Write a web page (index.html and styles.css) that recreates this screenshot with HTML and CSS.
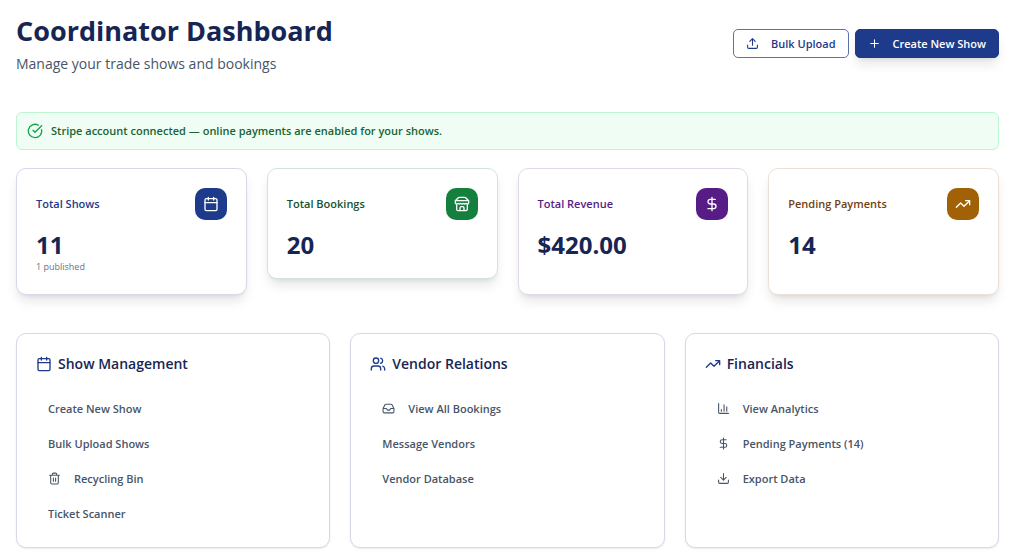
FILE: index.html
```
<!DOCTYPE html>
<html lang="en">
<head>
<meta charset="UTF-8">
<meta name="viewport" content="width=device-width, initial-scale=1.0">
<title>Coordinator Dashboard</title>
<link rel="stylesheet" href="styles.css">
</head>
<body>
    <!-- shared icons -->
    <svg class="sprite" aria-hidden="true">
        <symbol id="calendar" viewBox="0 0 24 24"><path d="M8 2v4M16 2v4M3 10h18"/><rect x="3" y="4" width="18" height="18" rx="2"/></symbol>
        <symbol id="dollar" viewBox="0 0 24 24"><path d="M12 2v20M17 5H9.5a3.5 3.5 0 0 0 0 7h5a3.5 3.5 0 0 1 0 7H6"/></symbol>
        <symbol id="trending" viewBox="0 0 24 24"><path d="M22 7l-8.500 8.500-5-5L2 17M16 7h6v6"/></symbol>
    </svg>

    <main class="dashboard">
        <header class="header">
            <div>
                <h1>Coordinator Dashboard</h1>
                <p class="subtitle">Manage your trade shows and bookings</p>
            </div>
            <div class="header-actions">
                <button type="button" class="btn btn-outline">
                    <svg class="icon" viewBox="0 0 24 24" aria-hidden="true"><path d="M12 3v12M17 8l-5-5-5 5M21 15v4a2 2 0 0 1-2 2H5a2 2 0 0 1-2-2v-4"/></svg>
                    Bulk Upload
                </button>
                <button type="button" class="btn btn-primary">
                    <svg class="icon" viewBox="0 0 24 24" aria-hidden="true"><path d="M5 12h14M12 5v14"/></svg>
                    Create New Show
                </button>
            </div>
        </header>

        <div class="alert" role="status">
            <svg class="icon icon-lg" viewBox="0 0 24 24" aria-hidden="true"><path d="M21.801 10A10 10 0 1 1 17 3.335M9 11l3 3L22 4"/></svg>
            <p>Stripe account connected — online payments are enabled for your shows.</p>
        </div>

        <section class="stats">
            <article class="card stat stat-blue">
                <div class="stat-head">
                    <h2>Total Shows</h2>
                    <span class="stat-icon"><svg class="icon icon-md" aria-hidden="true"><use href="#calendar"/></svg></span>
                </div>
                <p class="stat-value">11</p>
                <p class="stat-note">1 published</p>
            </article>
            <article class="card stat stat-green">
                <div class="stat-head">
                    <h2>Total Bookings</h2>
                    <span class="stat-icon"><svg class="icon icon-md" viewBox="0 0 24 24" aria-hidden="true"><path d="M2 7l4.410-4.410A2 2 0 0 1 7.830 2h8.340a2 2 0 0 1 1.420.590L22 7M4 12v8a2 2 0 0 0 2 2h12a2 2 0 0 0 2-2v-8M15 22v-4a2 2 0 0 0-2-2h-2a2 2 0 0 0-2 2v4M2 7h20M22 7v3a2 2 0 0 1-2 2 2.700 2.700 0 0 1-1.590-.630.700.700 0 0 0-.820 0A2.700 2.700 0 0 1 16 12a2.700 2.700 0 0 1-1.590-.630.700.700 0 0 0-.820 0A2.700 2.700 0 0 1 12 12a2.700 2.700 0 0 1-1.590-.630.700.700 0 0 0-.820 0A2.700 2.700 0 0 1 8 12a2.700 2.700 0 0 1-1.590-.630.700.700 0 0 0-.820 0A2.700 2.700 0 0 1 4 12a2 2 0 0 1-2-2V7"/></svg></span>
                </div>
                <p class="stat-value">20</p>
            </article>
            <article class="card stat stat-purple stat-tall">
                <div class="stat-head">
                    <h2>Total Revenue</h2>
                    <span class="stat-icon"><svg class="icon icon-md" aria-hidden="true"><use href="#dollar"/></svg></span>
                </div>
                <p class="stat-value">$420.00</p>
            </article>
            <article class="card stat stat-amber stat-tall">
                <div class="stat-head">
                    <h2>Pending Payments</h2>
                    <span class="stat-icon"><svg class="icon icon-md" aria-hidden="true"><use href="#trending"/></svg></span>
                </div>
                <p class="stat-value">14</p>
            </article>
        </section>

        <section class="panels">
            <article class="card panel">
                <h2><svg class="icon icon-md" aria-hidden="true"><use href="#calendar"/></svg>Show Management</h2>
                <nav class="links" aria-label="Show Management">
                    <a href="#">Create New Show</a>
                    <a href="#">Bulk Upload Shows</a>
                    <a href="#"><svg class="icon" viewBox="0 0 24 24" aria-hidden="true"><path d="M3 6h18M19 6v14a2 2 0 0 1-2 2H7a2 2 0 0 1-2-2V6M8 6V4a2 2 0 0 1 2-2h4a2 2 0 0 1 2 2v2M10 11v6M14 11v6"/></svg>Recycling Bin</a>
                    <a href="#">Ticket Scanner</a>
                </nav>
            </article>
            <article class="card panel">
                <h2><svg class="icon icon-md" viewBox="0 0 24 24" aria-hidden="true"><path d="M16 21v-2a4 4 0 0 0-4-4H6a4 4 0 0 0-4 4v2M22 21v-2a4 4 0 0 0-3-3.870M16 3.130a4 4 0 0 1 0 7.750"/><circle cx="9" cy="7" r="4"/></svg>Vendor Relations</h2>
                <nav class="links" aria-label="Vendor Relations">
                    <a href="#"><svg class="icon" viewBox="0 0 24 24" aria-hidden="true"><path d="M22 12h-6l-2 3h-4l-2-3H2M5.450 5.110L2 12v6a2 2 0 0 0 2 2h16a2 2 0 0 0 2-2v-6l-3.450-6.890A2 2 0 0 0 16.760 4H7.240a2 2 0 0 0-1.790 1.110z"/></svg>View All Bookings</a>
                    <a href="#">Message Vendors</a>
                    <a href="#">Vendor Database</a>
                </nav>
            </article>
            <article class="card panel">
                <h2><svg class="icon icon-md" aria-hidden="true"><use href="#trending"/></svg>Financials</h2>
                <nav class="links" aria-label="Financials">
                    <a href="#"><svg class="icon" viewBox="0 0 24 24" aria-hidden="true"><path d="M3 3v16a2 2 0 0 0 2 2h16M8 17v-3M13 17V5M18 17V9"/></svg>View Analytics</a>
                    <a href="#"><svg class="icon" aria-hidden="true"><use href="#dollar"/></svg>Pending Payments (14)</a>
                    <a href="#"><svg class="icon" viewBox="0 0 24 24" aria-hidden="true"><path d="M12 15V3M7 10l5 5 5-5M21 15v4a2 2 0 0 1-2 2H5a2 2 0 0 1-2-2v-4"/></svg>Export Data</a>
                </nav>
            </article>
        </section>
    </main>
</body>
</html>
```
FILE: styles.css
```
* {
    box-sizing: border-box;
}

body {
    margin: 0;
    background: #fff;
    color: #172554;
    font-family: "Segoe UI", "Open Sans", "Noto Sans", sans-serif;
    font-size: 11px;
    line-height: 16px;
}

h1, h2, p {
    margin: 0;
}

.sprite {
    display: none;
}

.dashboard {
    padding: 11px 25px 7px 16px;
}

.icon {
    flex: none;
    width: 13px;
    height: 13px;
    fill: none;
    stroke: currentColor;
    stroke-width: 2;
    stroke-linecap: round;
    stroke-linejoin: round;
}

.icon-md,
.icon-lg {
    width: 16px;
    height: 16px;
}

/* header */
.header {
    display: flex;
    justify-content: space-between;
    align-items: center;
    margin-bottom: 36px;
}

h1 {
    font-size: 27px;
    font-weight: 700;
    line-height: 40px;
}

.subtitle {
    color: #475569;
    font-size: 14px;
    line-height: 25px;
}

.header-actions {
    display: flex;
    gap: 6px;
}

.btn {
    display: flex;
    align-items: center;
    gap: 12px;
    height: 29px;
    padding: 0 12px;
    border: 1px solid #1e3a8a;
    border-radius: 5px;
    font: inherit;
    font-weight: 600;
}

.btn-outline {
    border-color: #5d71ad;
    background: #fff;
    color: #1e3a8a;
}

.btn-primary {
    background: #1e3a8a;
    color: #fff;
    box-shadow: 0 8px 12px -2px rgba(0, 0, 0, 0.1), 0 3px 5px -3px rgba(0, 0, 0, 0.1);
}

.alert {
    display: flex;
    align-items: center;
    gap: 8px;
    margin-bottom: 18px;
    padding: 10px;
    border: 1px solid #bbf7d0;
    border-radius: 6px;
    background: #f0fdf4;
    color: #166534;
    font-weight: 600;
}

.alert .icon {
    color: #16a34a;
}

.card {
    border: 1px solid #d5d9e9;
    border-radius: 10px;
    background: #fff;
}

/* stat cards */
.stats {
    display: grid;
    grid-template-columns: repeat(4, 1fr);
    align-items: start;
    gap: 20px;
    margin-bottom: 38px;
}

.stat {
    padding: 19px;
    box-shadow: 0 8px 12px -2px rgba(0, 0, 0, 0.1), 0 3px 5px -3px rgba(0, 0, 0, 0.1);
}

.stat-tall {
    align-self: stretch;
}

.stat-head {
    display: flex;
    justify-content: space-between;
    align-items: center;
    margin-bottom: 11px;
}

.stat h2 {
    font-size: 11px;
    font-weight: 600;
}

.stat-icon {
    display: flex;
    align-items: center;
    justify-content: center;
    width: 32px;
    height: 32px;
    border-radius: 10px;
    color: #fff;
}

.stat-value {
    font-size: 24px;
    font-weight: 700;
    line-height: 28px;
}

.stat-note {
    font-size: 9px;
}

.stat-blue { color: #1e3a8a; }
.stat-blue .stat-icon { background: #1e3a8a; }
.stat-green { border-color: #d3e2dc; color: #14532d; }
.stat-green .stat-icon { background: #15803d; }
.stat-purple { border-color: #e2d8ea; color: #581c87; }
.stat-purple .stat-icon { background: #581c87; }
.stat-amber { border-color: #eae0d9; color: #713f12; }
.stat-amber .stat-icon { background: #a16207; }

.stat .stat-value {
    color: #172554;
}

.stat .stat-note {
    color: #64748b;
}

/* panels */
.panels {
    display: grid;
    grid-template-columns: repeat(3, 1fr);
    gap: 20px;
}

.panel {
    padding: 19px;
    box-shadow: 0 1px 2px rgba(0, 0, 0, 0.08);
}

.panel h2 {
    display: flex;
    align-items: center;
    gap: 6px;
    margin-bottom: 19px;
    font-size: 14px;
    font-weight: 600;
    line-height: 22px;
}

.panel h2 .icon {
    color: #1e3a8a;
}

.links {
    display: flex;
    flex-direction: column;
    gap: 6px;
}

.links a {
    display: flex;
    align-items: center;
    gap: 13px;
    height: 29px;
    padding: 0 12px;
    color: #475569;
    font-weight: 600;
    text-decoration: none;
}
```
